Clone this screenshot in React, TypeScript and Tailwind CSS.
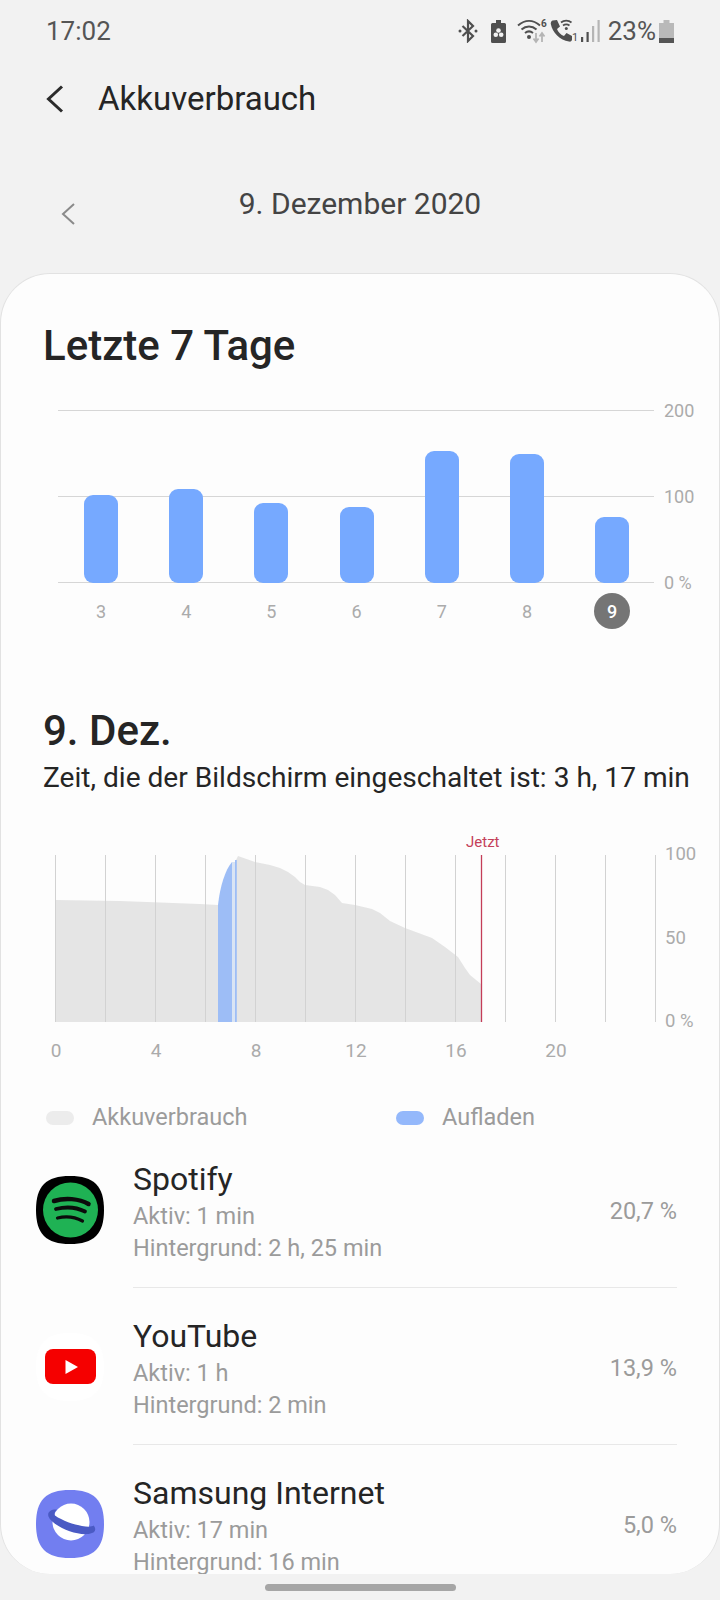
import React from 'react';

const bars = [
  { day: 3, height: 88 },
  { day: 4, height: 94 },
  { day: 5, height: 80 },
  { day: 6, height: 76 },
  { day: 7, height: 132 },
  { day: 8, height: 129 },
  { day: 9, height: 66 },
];

const apps = [
  { name: 'Spotify', active: 'Aktiv: 1 min', background: 'Hintergrund: 2 h, 25 min', percent: '20,7 %', icon: <SpotifyIcon /> },
  { name: 'YouTube', active: 'Aktiv: 1 h', background: 'Hintergrund: 2 min', percent: '13,9 %', icon: <YouTubeIcon /> },
  { name: 'Samsung Internet', active: 'Aktiv: 17 min', background: 'Hintergrund: 16 min', percent: '5,0 %', icon: <SamsungIcon /> },
];

const squircle = 'M34 0C58 0 68 10 68 34C68 58 58 68 34 68C10 68 0 58 0 34C0 10 10 0 34 0Z';

function SpotifyIcon() {
  return (
    <svg width="68" height="68" viewBox="0 0 68 68" fill="none">
      <path d={squircle} fill="#000" />
      <circle cx="34.5" cy="34" r="27.5" fill="#1fb254" />
      <path d="M18 25C29 21.500 43 22.500 52.500 28" stroke="#0b0b0b" strokeWidth="4.500" strokeLinecap="round" />
      <path d="M20 33C30 30.500 41 31.500 49 35.500" stroke="#0b0b0b" strokeWidth="3.800" strokeLinecap="round" />
      <path d="M21.500 42C30 40 39 41 46.500 45" stroke="#0b0b0b" strokeWidth="3.200" strokeLinecap="round" />
    </svg>
  );
}

function YouTubeIcon() {
  return (
    <svg width="68" height="68" viewBox="0 0 68 68" fill="none">
      <path d={squircle} fill="#fff" />
      <rect x="9" y="16" width="51" height="35" rx="8" fill="#f50000" />
      <path d="M29.500 27V41L42 34Z" fill="#fff" />
    </svg>
  );
}

function SamsungIcon() {
  return (
    <svg width="68" height="68" viewBox="0 0 68 68" fill="none">
      <path d={squircle} fill="#727ef0" />
      <circle cx="35" cy="32" r="18.500" fill="#fff" />
      <path
        d="M21 19.500C15 19 11 22 12.500 26.500C16 36 44 48 56 43C60 41.500 60 38 57.500 35.500C54 39 31 34 19 25.500C18 23.500 19 21 21 19.500Z"
        fill="#4a5ac4"
      />
    </svg>
  );
}

function StatusIcons() {
  return (
    <div className="flex items-center">
      <svg width="20" height="24" viewBox="0 0 20 24" fill="none">
        <path d="M4.500 7L15 17L10 22V2L15 7L4.500 17" stroke="#4f4f4f" strokeWidth="2.200" />
        <circle cx="2" cy="12" r="1.500" fill="#4f4f4f" />
        <circle cx="18" cy="12" r="1.500" fill="#4f4f4f" />
      </svg>
      <svg className="ml-[13px]" width="15" height="23" viewBox="0 0 15 23" fill="none">
        <path d="M5 0H10V3H13.500Q15 3 15 4.500V21.500Q15 23 13.500 23H1.500Q0 23 0 21.500V4.500Q0 3 1.500 3H5Z" fill="#4f4f4f" />
        <circle cx="7.500" cy="10.500" r="2.300" fill="#f2f2f2" />
        <circle cx="4.800" cy="14.800" r="2.300" fill="#f2f2f2" />
        <circle cx="10.200" cy="14.800" r="2.300" fill="#f2f2f2" />
        <rect x="7" y="15" width="1" height="3" fill="#4f4f4f" />
      </svg>
      <svg className="ml-[11px]" width="30" height="26" viewBox="0 0 30 26" fill="none">
        <path d="M1 7.500C8 1.500 16 1.500 23 7.500" stroke="#4f4f4f" strokeWidth="2" />
        <path d="M4.500 11.500C9 7.500 15 7.500 19.500 11.500" stroke="#4f4f4f" strokeWidth="2" />
        <path d="M8 15C10.500 13 13.500 13 16 15" stroke="#4f4f4f" strokeWidth="2" />
        <circle cx="12" cy="19" r="2" fill="#4f4f4f" />
        <path d="M19 15V23M16.500 20.500L19 24L21.500 20.500" stroke="#b5b5b5" strokeWidth="1.800" />
        <path d="M25 24V16M22.500 18.500L25 15L27.500 18.500" stroke="#b5b5b5" strokeWidth="1.800" />
        <text x="24" y="9" fontSize="10" fontWeight="700" fill="#4f4f4f">6</text>
      </svg>
      <svg className="ml-[2px]" width="29" height="26" viewBox="0 0 29 26" fill="none">
        <path
          d="M3.500 2.500L8 2L11 8.500L8 11C9 14 12 17 15 18L17.500 15L23 18V21.500C23 23 21.500 24 20 23.500C11 22 3.500 15 1.800 6C1.600 4.500 2.200 3 3.500 2.500Z"
          fill="#4f4f4f"
        />
        <path d="M12 4.500C15 2 19.500 2 22.500 4.500M14 7.500C16 6 18.500 6 20.500 7.500" stroke="#4f4f4f" strokeWidth="1.700" />
        <circle cx="17.300" cy="10.500" r="1.500" fill="#4f4f4f" />
        <text x="23" y="23" fontSize="11" fill="#4f4f4f">1</text>
      </svg>
      <svg className="ml-[2px]" width="20" height="24" viewBox="0 0 20 24" fill="none">
        <rect x="1" y="18" width="2.200" height="5" fill="#4f4f4f" />
        <rect x="6.500" y="13" width="2.200" height="10" fill="#4f4f4f" />
        <rect x="12" y="7" width="2.200" height="16" fill="#b5b5b5" />
        <rect x="17.500" y="1" width="2.200" height="22" fill="#b5b5b5" />
      </svg>
      <span className="ml-[8px] text-[26px] leading-[30px] text-[#555]">23%</span>
      <svg className="ml-[3px]" width="15" height="23" viewBox="0 0 15 23">
        <path d="M4.500 0H10.500V3H15V23H0V3H4.500Z" fill="#b9b9b9" />
        <rect y="18" width="15" height="5" fill="#555" />
      </svg>
    </div>
  );
}

function UsagePlot() {
  const hours = Array.from({ length: 13 }, (_, i) => 0.5 + i * 50);
  const y = 855;
  const x = 55;
  const pts = (list: number[][]) => list.map(([a, b]) => `${a - x},${b - y}`).join(' ');
  return (
    <svg width="602" height="167" viewBox="0 0 602 167" className="shrink-0">
      <polygon
        fill="#e5e5e5"
        points={pts([
          [56, 1022], [56, 900], [120, 901], [200, 904], [218, 905], [218, 1022],
        ])}
      />
      <polygon
        fill="#e5e5e5"
        points={pts([
          [236, 1022], [236, 860], [238, 856], [255, 862], [270, 865], [280, 868], [288, 872], [295, 877], [300, 882],
          [305, 885], [320, 887], [328, 890], [335, 895], [342, 903], [355, 905], [372, 909], [380, 913], [390, 921],
          [405, 928], [432, 938], [445, 947], [458, 957], [465, 968], [470, 975], [481, 984], [481, 1022],
        ])}
      />
      <rect x={232 - x} y={862 - y} width="4" height="160" fill="#d9e4f4" />
      <path d="M163 167V50C165 32 170 15 177 7V167Z" fill="#9dbdf6" />
      <rect x={235 - x} y={860 - y} width="1.800" height="162" fill="#9dbdf6" />
      {hours.map((h) => (
        <line key={h} x1={h} x2={h} y1="0" y2="167" stroke="#d2d2d2" strokeWidth="1" />
      ))}
      <line x1="426.500" x2="426.500" y1="0" y2="167" stroke="#c43d58" strokeWidth="1.300" />
    </svg>
  );
}

export default function App() {
  return (
    <div className="flex h-[1600px] w-[720px] flex-col overflow-hidden bg-[#f2f2f2] font-[Roboto,sans-serif]">
      {/* Status bar */}
      <div className="flex h-[62px] items-center justify-between pl-[46px] pr-[46px]">
        <span className="text-[26px] leading-[30px] text-[#555]">17:02</span>
        <StatusIcons />
      </div>

      {/* Title */}
      <div className="flex h-[74px] items-center pl-[46px]">
        <svg width="18" height="28" viewBox="0 0 18 28" fill="none">
          <path d="M16 1.500L2.500 14L16 26.500" stroke="#2b2b2b" strokeWidth="3" />
        </svg>
        <h1 className="ml-[34px] text-[33px] font-normal leading-[40px] text-[#252525]">Akkuverbrauch</h1>
      </div>

      {/* Date */}
      <div className="mt-[50px] grid h-[36px] grid-cols-[1fr_auto_1fr]">
        <svg className="ml-[61px] mt-[17px]" width="14" height="22" viewBox="0 0 14 22" fill="none">
          <path d="M13 1L2 11L13 21" stroke="#8a8a8a" strokeWidth="2" />
        </svg>
        <span className="text-[30px] leading-[36px] text-[#444]">9. Dezember 2020</span>
      </div>

      {/* Card */}
      <div className="mt-[51px] h-[1301px] shrink-0 overflow-hidden rounded-[50px] border border-b-0 border-[#e2e2e2] bg-[#fdfdfd]">
        <h2 className="ml-[42px] mt-[49px] text-[42px] font-medium leading-[46px] text-[#252525]">Letzte 7 Tage</h2>

        {/* Weekly chart */}
        <div className="relative ml-[57px] mt-[41px] h-[173px] w-[642px]">
          <div className="flex h-full flex-col justify-between">
            {['200', '100', '0 %'].map((label) => (
              <div key={label} className="flex h-px items-center">
                <div className="h-px w-[596px] bg-[#d6d6d6]" />
                <span className="ml-[10px] text-[18px] text-[#ababab]">{label}</span>
              </div>
            ))}
          </div>
          <div className="absolute bottom-0 left-[26px] flex items-end gap-[51.2px]">
            {bars.map((bar) => (
              <div
                key={bar.day}
                className="w-[34px] rounded-[9px] bg-[#76a9ff]"
                style={{ height: bar.height }}
              />
            ))}
          </div>
        </div>
        <div className="ml-[83px] mt-[10px] flex gap-[51.2px]">
          {bars.map((bar) => (
            <div key={bar.day} className="flex h-[36px] w-[34px] items-center justify-center">
              {bar.day === 9 ? (
                <span className="flex h-[36px] w-[36px] shrink-0 items-center justify-center rounded-full bg-[#757575] text-[18px] font-medium text-white">
                  9
                </span>
              ) : (
                <span className="text-[18px] text-[#ababab]">{bar.day}</span>
              )}
            </div>
          ))}
        </div>

        {/* Day detail */}
        <h2 className="ml-[42px] mt-[79px] text-[42px] font-medium leading-[46px] text-[#252525]">9. Dez.</h2>
        <p className="ml-[42px] mt-[6px] whitespace-nowrap text-[28.100px] leading-[36px] text-[#252525]">
          Zeit, die der Bildschirm eingeschaltet ist: 3 h, 17 min
        </p>

        <div className="ml-[465px] mt-[36px] h-[20px] text-[15px] leading-[20px] text-[#c4405a]">Jetzt</div>
        <div className="ml-[54px] mt-[3px] flex h-[167px]">
          <UsagePlot />
          <div className="ml-[8px] flex flex-col justify-between">
            {['100', '50', '0 %'].map((label) => (
              <div key={label} className="flex h-0 items-center text-[18.500px] text-[#ababab]">
                {label}
              </div>
            ))}
          </div>
        </div>
        <div className="ml-[5px] mt-[17px] flex">
          {['0', '4', '8', '12', '16', '20'].map((label) => (
            <span key={label} className="w-[100px] text-center text-[19px] leading-[24px] text-[#ababab]">
              {label}
            </span>
          ))}
        </div>

        {/* Legend */}
        <div className="mt-[41px] flex h-[27px] items-center text-[23.500px] text-[#9b9b9b]">
          <span className="ml-[45px] h-[14px] w-[28px] rounded-[7px] bg-[#ececec]" />
          <span className="ml-[18px] w-[304px]">Akkuverbrauch</span>
          <span className="h-[14px] w-[28px] rounded-[7px] bg-[#94b8fb]" />
          <span className="ml-[18px]">Aufladen</span>
        </div>

        {/* App list */}
        {apps.map((app) => (
          <div key={app.name} className="flex h-[157px] items-center pl-[35px]">
            <div className="shrink-0">{app.icon}</div>
            <div className="ml-[29px] flex h-full w-[544px] items-center justify-between border-b border-[#e8e8e8]">
              <div className="mt-[3px]">
                <div className="text-[32px] leading-[40px] text-[#252525]">{app.name}</div>
                <div className="mt-[2px] text-[23.500px] leading-[31px] text-[#9b9b9b]">{app.active}</div>
                <div className="mt-[2px] text-[23.500px] leading-[29px] text-[#9b9b9b]">{app.background}</div>
              </div>
              <span className="pt-[6px] text-[23.500px] text-[#9b9b9b]">{app.percent}</span>
            </div>
          </div>
        ))}
      </div>

      {/* Home indicator */}
      <div className="mx-auto mt-[10px] h-[7px] w-[191px] rounded-full bg-[#a6a6a6]" />
    </div>
  );
}
